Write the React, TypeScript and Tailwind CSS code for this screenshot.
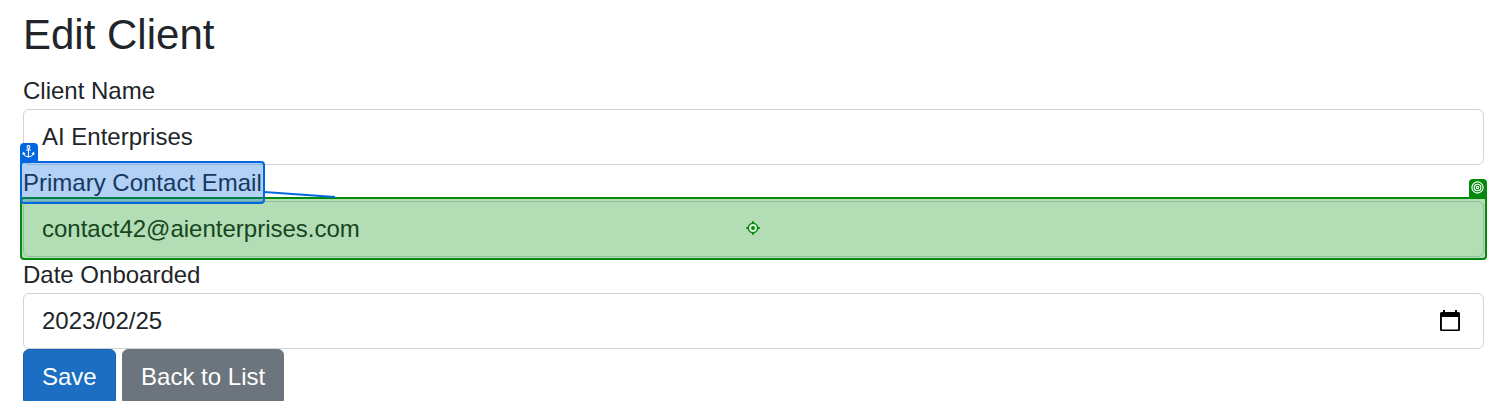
import React from "react";

function Field({ label, value, children, overlay, labelOverlay }: {
  label: string;
  value: string;
  children?: React.ReactNode;
  overlay?: React.ReactNode;
  labelOverlay?: React.ReactNode;
}) {
  return (
    <div>
      <div className="relative z-20 h-9 w-fit whitespace-nowrap leading-9">
        {label}
        {labelOverlay}
      </div>
      <div className="relative flex h-14 items-center justify-between rounded-md border border-[#ced4da] bg-white pr-[22px] pl-[18px]">
        <span>{value}</span>
        {children}
        {overlay}
      </div>
    </div>
  );
}

function AnchorOverlay() {
  return (
    <div className="absolute -top-1 -left-[3px] h-[43px] w-[245px] rounded-[4px] border-2 border-[#0067df] bg-[#0067df]/30">
      <div className="absolute -top-[20px] -left-[2px] flex h-5 w-[18px] items-center justify-center rounded-t-[4px] bg-[#0067df] pr-px pb-[3px]">
        <svg className="size-[13px]" viewBox="0 0 13 13" fill="none" stroke="white" strokeWidth="1.1">
          <circle cx="6.5" cy="2" r="1.4" />
          <path d="M6.5 3.4V12M4 5H9M1.5 8C1.7 10.2 3.5 11.4 6.5 12C9.5 11.4 11.3 10.2 11.5 8M0.6 9.4L1.5 7.7L3.1 8.9M12.4 9.4L11.5 7.7L9.9 8.9" />
        </svg>
      </div>
      <svg className="absolute top-[26px] left-[242px] h-[10px] w-[72px]" viewBox="0 0 72 10">
        <path d="M0 3L71 8.1" stroke="#0067df" strokeWidth="2" />
      </svg>
    </div>
  );
}

function TargetOverlay() {
  return (
    <div className="absolute -top-[5px] -right-[4px] -bottom-[4px] -left-[4px] flex items-center justify-center rounded-[4px] rounded-tr-none border-2 border-[#038a0c] bg-[#038f0a]/30 pr-0.5 pb-0.5">
      <div className="absolute -top-[20px] -right-[2px] flex h-5 w-[18px] items-center justify-center rounded-t-[4px] bg-[#038a0c] pb-[3px] pr-px">
        <svg className="size-[13px]" viewBox="0 0 13 13" fill="none" stroke="white" strokeWidth="1.1">
          <circle cx="6.5" cy="6.5" r="5.6" />
          <circle cx="6.5" cy="6.5" r="3.3" />
          <circle cx="6.5" cy="6.5" r="1.1" />
        </svg>
      </div>
      <svg className="size-[14px]" viewBox="0 0 14 14">
        <circle cx="7" cy="7" r="4.7" fill="#d9eed9" stroke="#038a0c" strokeWidth="1.5" />
        <circle cx="7" cy="7" r="1.9" fill="#038a0c" />
        <path d="M7 0.3V3M7 11V13.7M0.3 7H3M11 7H13.7" stroke="#038a0c" strokeWidth="2" />
      </svg>
    </div>
  );
}

export default function App() {
  return (
    <main className="h-[401px] overflow-hidden bg-white px-[23px] font-['Liberation_Sans',Arial,sans-serif] text-[24px] text-[#212529]">
      <h1 className="h-[73px] pt-[10px] text-[42px] leading-[50px] font-normal">Edit Client</h1>
      <Field label="Client Name" value="AI Enterprises" />
      <Field
        label="Primary Contact Email"
        value="contact42@aienterprises.com"
        labelOverlay={<AnchorOverlay />}
        overlay={<TargetOverlay />}
      />
      <Field label="Date Onboarded" value="2023/02/25">
        <svg className="h-[22px] w-[22px]" viewBox="0 0 22 22">
          <path fillRule="evenodd" d="M4 0H6V2H16V0H18V2H19.5Q21 2 21 3.5V19.5Q21 21 19.5 21H2.5Q1 21 1 19.5V3.5Q1 2 2.5 2H4ZM2.9 7V19.4H19.1V7Z" fill="black" />
        </svg>
      </Field>
      <div className="flex gap-1.5 leading-9 text-white">
        <button className="h-14 rounded-md border border-[#1861ac] bg-[#1b6ec2] px-[18px]">Save</button>
        <button className="h-14 rounded-md border border-[#6c757d] bg-[#6c757d] pr-[17.6px] pl-[18.4px]">Back to List</button>
      </div>
    </main>
  );
}
